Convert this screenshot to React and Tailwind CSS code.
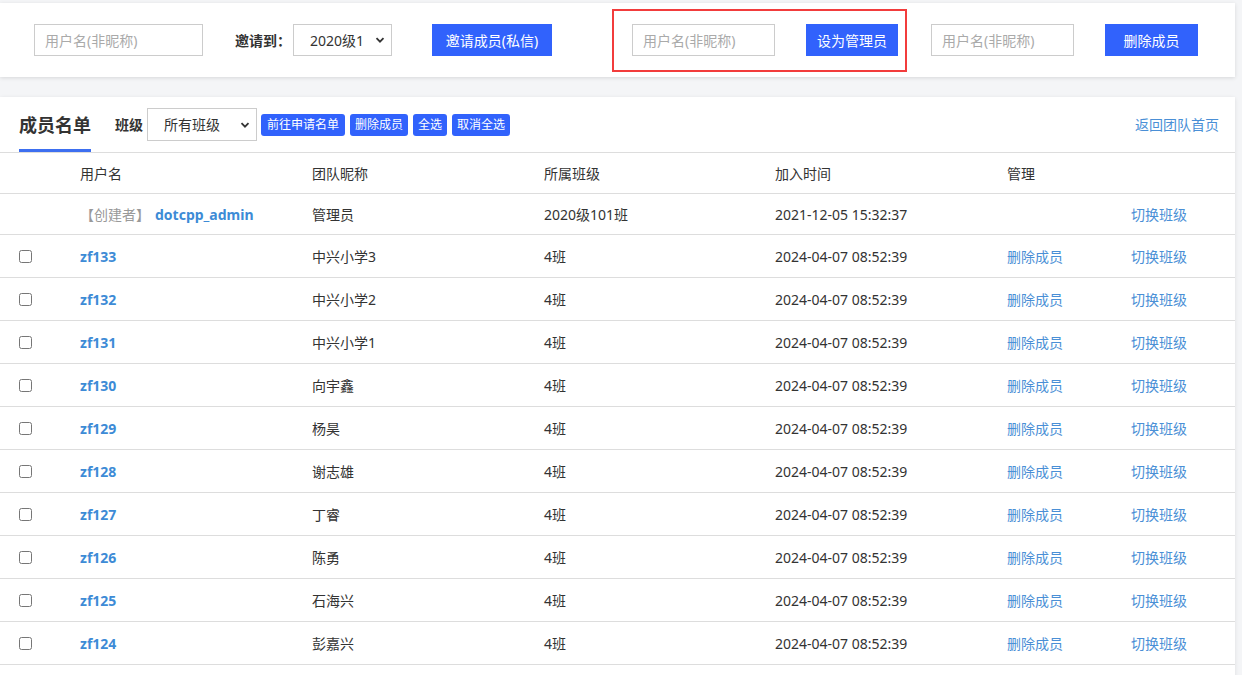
import React from "react";

const Chevron = () => (
  <svg width="10" height="10" viewBox="0 0 10 10" className="absolute right-[7px] top-1/2 -translate-y-1/2 pointer-events-none">
    <path d="M1.5 3.2 L5 6.7 L8.5 3.2" fill="none" stroke="#333" strokeWidth="1.8" />
  </svg>
);

const rows = [
  ["zf133", "中兴小学3"],
  ["zf132", "中兴小学2"],
  ["zf131", "中兴小学1"],
  ["zf130", "向宇鑫"],
  ["zf129", "杨昊"],
  ["zf128", "谢志雄"],
  ["zf127", "丁睿"],
  ["zf126", "陈勇"],
  ["zf125", "石海兴"],
  ["zf124", "彭嘉兴"],
];

const grid = "grid grid-cols-[80px_232px_232px_231px_232px_124px_1fr] items-center";

export default function App() {
  return (
    <div
      className="w-[1242px] h-[675px] overflow-hidden bg-[#f4f5f7] text-[#333] text-[14px]"
      style={{ fontFamily: '"Noto Sans", "Noto Sans CJK SC", sans-serif' }}
    >
      <div className="pt-[3px] pr-[7px]">
        {/* top card */}
        <div className="bg-white h-[74px] shadow-[0_1px_4px_rgba(0,0,0,0.12)] flex items-center">
          <input
            placeholder="用户名(非昵称)"
            className="ml-[34px] w-[169px] h-[32px] border border-[#ccc] px-[10px] text-[14px] placeholder-[#aaa] outline-none"
          />
          <span className="ml-[32px] font-bold text-[14px]">邀请到：</span>
          <div className="relative ml-[2px]">
            <select className="appearance-none w-[99px] h-[32px] border border-[#ccc] bg-white pl-[16px] text-[14px] text-[#333] outline-none">
              <option>2020级1</option>
            </select>
            <Chevron />
          </div>
          <button className="ml-[40px] w-[120px] h-[32px] bg-[#3162fc] text-white text-[14px]">邀请成员(私信)</button>
          <div className="ml-[60px] w-[295px] h-[63px] border-2 border-[#f23c3c] flex items-center">
            <input
              placeholder="用户名(非昵称)"
              className="ml-[18px] w-[143px] h-[32px] border border-[#ccc] px-[10px] text-[14px] placeholder-[#aaa] outline-none"
            />
            <button className="ml-[31px] w-[92px] h-[32px] bg-[#3162fc] text-white text-[14px]">设为管理员</button>
          </div>
          <input
            placeholder="用户名(非昵称)"
            className="ml-[24px] w-[143px] h-[32px] border border-[#ccc] px-[10px] text-[14px] placeholder-[#aaa] outline-none"
          />
          <button className="ml-[31px] w-[93px] h-[32px] bg-[#3162fc] text-white text-[14px]">删除成员</button>
        </div>

        {/* members card */}
        <div className="mt-[20px] bg-white shadow-[0_1px_4px_rgba(0,0,0,0.10)] h-[600px]">
          <div className="h-[56px] flex items-center border-b border-[#ddd] relative">
            <div className="ml-[19px] relative h-full flex items-center">
              <span className="text-[18px] font-bold text-[#333] leading-none">成员名单</span>
              <div className="absolute left-0 right-0 bottom-0 h-[3px] bg-[#3d6ff0]"></div>
            </div>
            <span className="ml-[24px] font-bold text-[14px]">班级</span>
            <div className="relative ml-[4px]">
              <select className="appearance-none w-[110px] h-[33px] border border-[#ccc] bg-white pl-[16px] text-[14px] text-[#333] outline-none">
                <option>所有班级</option>
              </select>
              <Chevron />
            </div>
            <div className="ml-[4px] flex gap-[5px]">
              <button className="h-[22px] px-[6px] rounded-[3px] bg-[#3162fc] text-white text-[12px]">前往申请名单</button>
              <button className="h-[22px] px-[5px] rounded-[3px] bg-[#3162fc] text-white text-[12px]">删除成员</button>
              <button className="h-[22px] px-[5px] rounded-[3px] bg-[#3162fc] text-white text-[12px]">全选</button>
              <button className="h-[22px] px-[5px] rounded-[3px] bg-[#3162fc] text-white text-[12px]">取消全选</button>
            </div>
            <span className="ml-auto mr-[16px] text-[#4a8fd6] text-[14px]">返回团队首页</span>
          </div>

          <div className={`${grid} h-[41px] border-b border-[#ddd]`}>
            <div></div>
            <div>用户名</div>
            <div>团队昵称</div>
            <div>所属班级</div>
            <div>加入时间</div>
            <div>管理</div>
            <div></div>
          </div>

          <div className={`${grid} h-[41px] border-b border-[#ddd]`}>
            <div></div>
            <div className="whitespace-nowrap">
              <span className="text-[#999]">【创建者】</span>
              <span className="ml-[5px] font-bold text-[#3d8bd6]">dotcpp_admin</span>
            </div>
            <div>管理员</div>
            <div>2020级101班</div>
            <div>2021-12-05 15:32:37</div>
            <div></div>
            <div className="text-[#4a8fd6]">切换班级</div>
          </div>

          {rows.map(([u, n]) => (
            <div key={u} className={`${grid} h-[43px] border-b border-[#ddd]`}>
              <div className="pl-[19px] flex items-center">
                <input type="checkbox" className="w-[13px] h-[13px] m-0" />
              </div>
              <div className="font-bold text-[#3d8bd6]">{u}</div>
              <div>{n}</div>
              <div>4班</div>
              <div>2024-04-07 08:52:39</div>
              <div className="text-[#4a8fd6]">删除成员</div>
              <div className="text-[#4a8fd6]">切换班级</div>
            </div>
          ))}
        </div>
      </div>
    </div>
  );
}
